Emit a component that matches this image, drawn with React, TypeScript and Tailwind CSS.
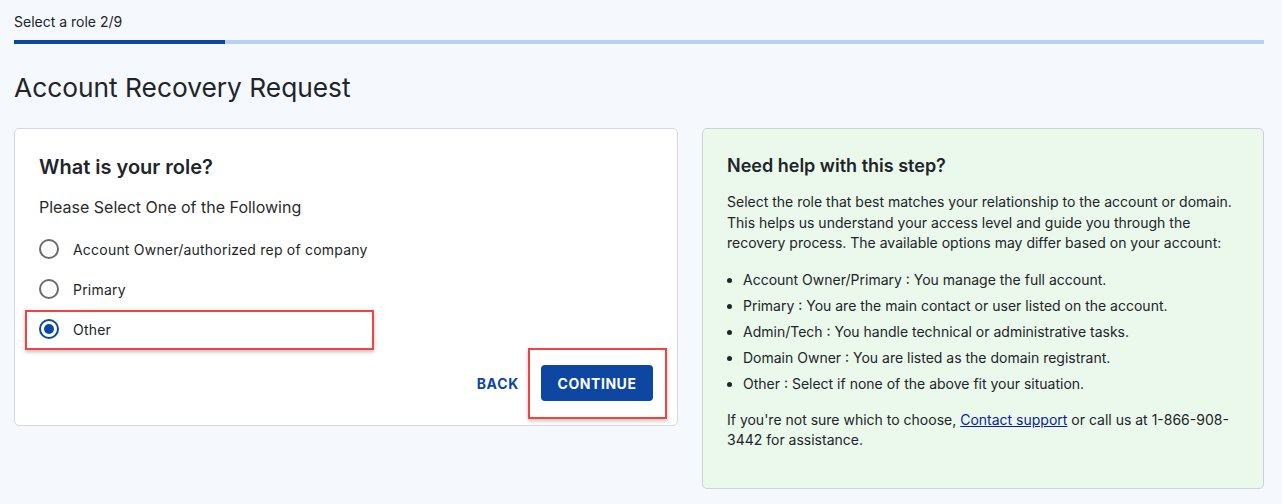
import { useState } from 'react';

const roles = [
    'Account Owner/authorized rep of company',
    'Primary',
    'Other',
];

const helpItems = [
    'Account Owner/Primary : You manage the full account.',
    'Primary : You are the main contact or user listed on the account.',
    'Admin/Tech : You handle technical or administrative tasks.',
    'Domain Owner : You are listed as the domain registrant.',
    'Other : Select if none of the above fit your situation.',
];

function Radio({ checked }: { checked: boolean }) {
    return (
        <span
            className={
                checked
                    ? 'w-5 h-5 rounded-full border-2 border-[#0d47a1] flex items-center justify-center shrink-0'
                    : 'w-5 h-5 rounded-full border-2 border-[#6b6b6b] shrink-0'
            }
        >
            {checked && <span className="w-[10px] h-[10px] rounded-full bg-[#0d47a1]" />}
        </span>
    );
}

export default function App() {
    const [role, setRole] = useState('Other');

    return (
        <div className="min-h-[504px] bg-[#f5f8fc] pl-[14px] pr-[18px] pt-[13px] text-[#212529] font-['Inter','Liberation_Sans',sans-serif]">
            {/* Progress */}
            <p className="text-[14px] leading-[18px]">Select a role 2/9</p>
            <div className="mt-[9px] h-[4px] bg-[#b9d0f2] flex">
                <div className="w-[211px] bg-[#0d47a1]" />
            </div>

            <h1 className="mt-[27px] text-[26.3px] leading-[34px] text-[#212529]">Account Recovery Request</h1>

            <div className="mt-[23px] flex gap-[24px] items-start">
                {/* Role card */}
                <div className="w-[664px] bg-white border border-[#d5d9df] rounded-[5px] px-6 pt-6 pb-6">
                    <h2 className="text-[20px] leading-[28px] font-semibold">What is your role?</h2>
                    <p className="mt-[14px] text-[16px] leading-[24px] text-[#2b2b2b]">Please Select One of the Following</p>

                    <div className="mt-[10px] flex flex-col">
                        {roles.map((r) => (
                            <label
                                key={r}
                                onClick={() => setRole(r)}
                                className="relative h-10 flex items-center gap-[14px] text-[14px] tracking-[0.015em] cursor-pointer"
                            >
                                <Radio checked={role === r} />
                                <span>{r}</span>
                                {r === 'Other' && (
                                    <span className="absolute left-[-14px] top-[1px] w-[349px] h-[40px] border-2 border-[#ef4444] shadow-[0_2px_4px_rgba(0,0,0,0.25)]" />
                                )}
                            </label>
                        ))}
                    </div>

                    <div className="mt-4 flex justify-end items-center gap-[22px]">
                        <button className="text-[14px] font-bold tracking-[0.05em] text-[#0d47a1]">BACK</button>
                        <div className="relative">
                            <button className="h-9 w-[112px] rounded-[4px] bg-[#0d47a1] text-white text-[14px] font-bold tracking-[0.04em]">
                                CONTINUE
                            </button>
                            <span className="absolute left-[-13px] top-[-17px] w-[139px] h-[71px] border-2 border-[#ef4444] shadow-[0_2px_4px_rgba(0,0,0,0.25)]" />
                        </div>
                    </div>
                </div>

                {/* Help card */}
                <div className="flex-1 bg-[#ebf8ec] border border-[#cdd2d8] rounded-[5px] px-6 pt-6 pb-[38px] text-[14px] leading-[20px]">
                    <h3 className="text-[18px] leading-[26px] font-semibold">Need help with this step?</h3>
                    <p className="mt-[13px] leading-[20.5px]">
                        Select the role that best matches your relationship to the account or domain. This helps us understand your access level and guide you through the recovery process. The available options may differ based on your account:
                    </p>
                    <ul className="mt-[13px] list-disc pl-4">
                        {helpItems.map((item) => (
                            <li key={item} className="py-[3px] leading-[20px]">{item}</li>
                        ))}
                    </ul>
                    <p className="mt-[13px]">
                        If you're not sure which to choose,{' '}
                        <a href="#" className="underline text-[#0b1f96]">Contact support</a>{' '}
                        or call us at 1-866-908-3442 for assistance.
                    </p>
                </div>
            </div>
        </div>
    );
}
